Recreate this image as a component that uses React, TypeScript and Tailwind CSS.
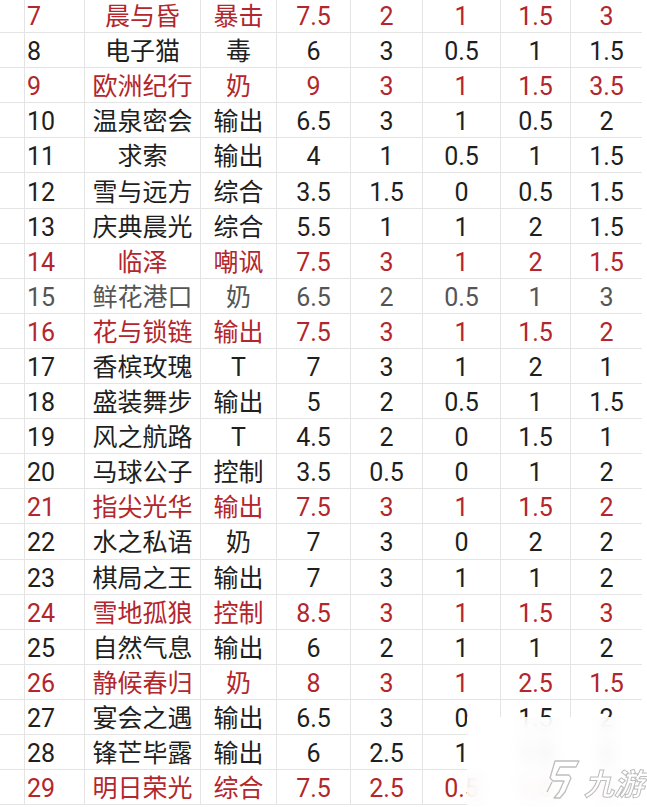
import React from "react";

type Row = { n: string; name: string; type: string; v: string[]; c: "r" | "k" | "g" };

const rows: Row[] = [
  { n: "7", name: "晨与昏", type: "暴击", v: ["7.5", "2", "1", "1.5", "3"], c: "r" },
  { n: "8", name: "电子猫", type: "毒", v: ["6", "3", "0.5", "1", "1.5"], c: "k" },
  { n: "9", name: "欧洲纪行", type: "奶", v: ["9", "3", "1", "1.5", "3.5"], c: "r" },
  { n: "10", name: "温泉密会", type: "输出", v: ["6.5", "3", "1", "0.5", "2"], c: "k" },
  { n: "11", name: "求索", type: "输出", v: ["4", "1", "0.5", "1", "1.5"], c: "k" },
  { n: "12", name: "雪与远方", type: "综合", v: ["3.5", "1.5", "0", "0.5", "1.5"], c: "k" },
  { n: "13", name: "庆典晨光", type: "综合", v: ["5.5", "1", "1", "2", "1.5"], c: "k" },
  { n: "14", name: "临泽", type: "嘲讽", v: ["7.5", "3", "1", "2", "1.5"], c: "r" },
  { n: "15", name: "鲜花港口", type: "奶", v: ["6.5", "2", "0.5", "1", "3"], c: "g" },
  { n: "16", name: "花与锁链", type: "输出", v: ["7.5", "3", "1", "1.5", "2"], c: "r" },
  { n: "17", name: "香槟玫瑰", type: "T", v: ["7", "3", "1", "2", "1"], c: "k" },
  { n: "18", name: "盛装舞步", type: "输出", v: ["5", "2", "0.5", "1", "1.5"], c: "k" },
  { n: "19", name: "风之航路", type: "T", v: ["4.5", "2", "0", "1.5", "1"], c: "k" },
  { n: "20", name: "马球公子", type: "控制", v: ["3.5", "0.5", "0", "1", "2"], c: "k" },
  { n: "21", name: "指尖光华", type: "输出", v: ["7.5", "3", "1", "1.5", "2"], c: "r" },
  { n: "22", name: "水之私语", type: "奶", v: ["7", "3", "0", "2", "2"], c: "k" },
  { n: "23", name: "棋局之王", type: "输出", v: ["7", "3", "1", "1", "2"], c: "k" },
  { n: "24", name: "雪地孤狼", type: "控制", v: ["8.5", "3", "1", "1.5", "3"], c: "r" },
  { n: "25", name: "自然气息", type: "输出", v: ["6", "2", "1", "1", "2"], c: "k" },
  { n: "26", name: "静候春归", type: "奶", v: ["8", "3", "1", "2.5", "1.5"], c: "r" },
  { n: "27", name: "宴会之遇", type: "输出", v: ["6.5", "3", "0", "1.5", "2"], c: "k" },
  { n: "28", name: "锋芒毕露", type: "输出", v: ["6", "2.5", "1", "1.5", "2"], c: "k" },
  { n: "29", name: "明日荣光", type: "综合", v: ["7.5", "2.5", "0.5", "1.5", "2"], c: "r" },
];

const colorClass = {
  r: "text-[#b3262c]",
  k: "text-[#1f1f1f]",
  g: "text-[#555555]",
};

export default function App() {
  return (
    <div className="relative w-[647px] h-[807px] overflow-hidden bg-white font-['Roboto','Noto_Sans_CJK_SC',sans-serif] text-[25px] leading-none">
      <div className="-mt-[2px] flex flex-col">
        {rows.map((r) => (
          <div
            key={r.n}
            className={`grid grid-cols-[24px_60px_116px_76px_74px_72px_78px_70px_72px] w-[642px] h-[35.1px] border-b border-[#e4e4e4] ${colorClass[r.c]}`}
          >
            <div />
            <div className="flex items-center pl-[2px] pt-[3px] border-l border-[#e4e4e4]">{r.n}</div>
            <div className="flex items-center justify-center pt-[3px] border-l border-[#e4e4e4] whitespace-nowrap">{r.name}</div>
            <div className="flex items-center justify-center pt-[3px] border-l border-[#e4e4e4]">{r.type}</div>
            {r.v.map((x, i) => (
              <div key={i} className="flex items-center justify-center pt-[3px] border-l border-[#e4e4e4]">
                {x}
              </div>
            ))}
          </div>
        ))}
      </div>

      <div className="absolute left-[467px] top-[717px] w-[180px] h-[90px] bg-white/85 backdrop-blur-[8px] flex items-end justify-end pr-[3px] pb-[6px] gap-[1px]">
        <svg width="40" height="42" viewBox="0 0 40 42" className="mb-[1px]">
          <path
            d="M12 3 L36 3 L33 9 L17 9 L13 17 L26 17 L28 20 L22 34 L17 40 L11 40 L16 34 L21 23 L10 23 L7 20 Z"
            fill="white"
            stroke="#bdbdbd"
            strokeWidth="1.3"
            strokeLinejoin="round"
          />
          <path d="M4 34 L9 24" stroke="#bdbdbd" strokeWidth="1.3" fill="none" />
        </svg>
        <span className="italic font-['Noto_Sans_CJK_SC',sans-serif] text-[30px] font-bold text-white [-webkit-text-stroke:1px_#bdbdbd] leading-none mb-[4px]">
          九游
        </span>
      </div>
    </div>
  );
}
